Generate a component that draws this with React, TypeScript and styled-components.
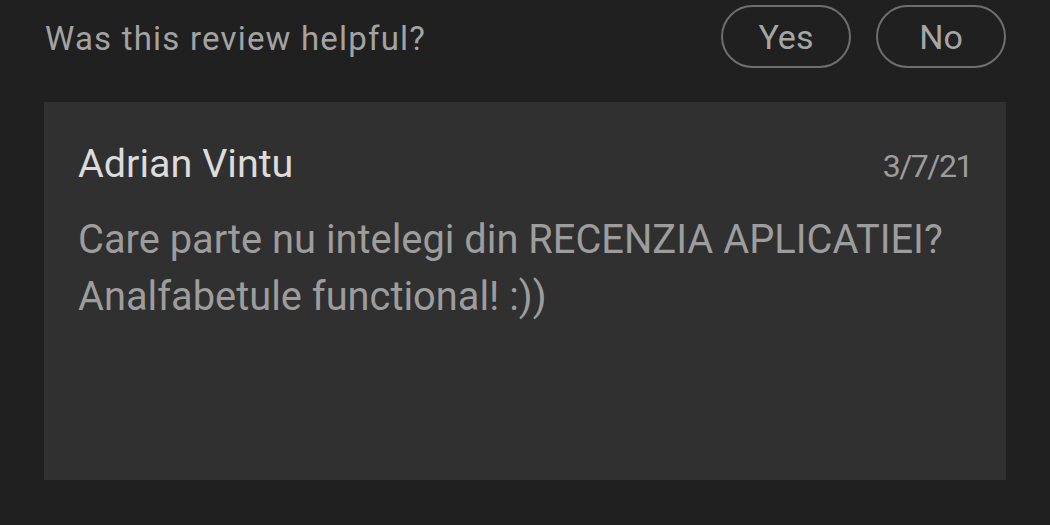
import styled, { createGlobalStyle } from 'styled-components';

const GlobalStyle = createGlobalStyle`
  html, body {
    margin: 0;
    padding: 0;
    background: #202020;
  }
  body {
    font-family: Roboto, 'Noto Sans', Arial, sans-serif;
    -webkit-font-smoothing: antialiased;
  }
`;

const Page = styled.div`
  width: 1050px;
  height: 525px;
  background: #202020;
  padding: 5px 44px 0 44px;
  box-sizing: border-box;
  display: flex;
  flex-direction: column;
  gap: 34px;
`;

const HelpfulRow = styled.div`
  display: flex;
  align-items: center;
  justify-content: space-between;
`;

const Question = styled.span`
  color: #a3a3a3;
  font-size: 33px;
  letter-spacing: 1.2px;
  padding: 4px 0 0 1px;
`;

const Buttons = styled.div`
  display: flex;
  gap: 25px;
`;

const PillButton = styled.button`
  width: 130px;
  height: 63px;
  border: 2px solid #6e6e6e;
  border-radius: 32px;
  background: transparent;
  color: #a6a6a6;
  font-family: Roboto, 'Noto Sans', Arial, sans-serif;
  font-size: 34px;
  padding: 0;
  cursor: pointer;
`;

const Card = styled.div`
  height: 378px;
  background: #303030;
  box-sizing: border-box;
  padding: 38px 34px 0 34px;
`;

const CardHeader = styled.div`
  display: flex;
  justify-content: space-between;
  align-items: baseline;
  line-height: 48px;
`;

const Author = styled.span`
  color: #dcdcdc;
  font-size: 39.5px;
`;

const Date = styled.span`
  color: #9c9c9c;
  font-size: 32px;
  letter-spacing: -1.5px;
`;

const Body = styled.p`
  margin: 21px 0 0 0;
  color: #9d9d9d;
  font-size: 39.8px;
  line-height: 57px;
`;

export default function App() {
  return (
    <>
      <GlobalStyle />
      <Page>
        <HelpfulRow>
          <Question>Was this review helpful?</Question>
          <Buttons>
            <PillButton>Yes</PillButton>
            <PillButton>No</PillButton>
          </Buttons>
        </HelpfulRow>
        <Card>
          <CardHeader>
            <Author>Adrian Vintu</Author>
            <Date>3/7/21</Date>
          </CardHeader>
          <Body>
            Care parte nu intelegi din RECENZIA APLICATIEI?
            <br />
            Analfabetule functional! :))
          </Body>
        </Card>
      </Page>
    </>
  );
}
